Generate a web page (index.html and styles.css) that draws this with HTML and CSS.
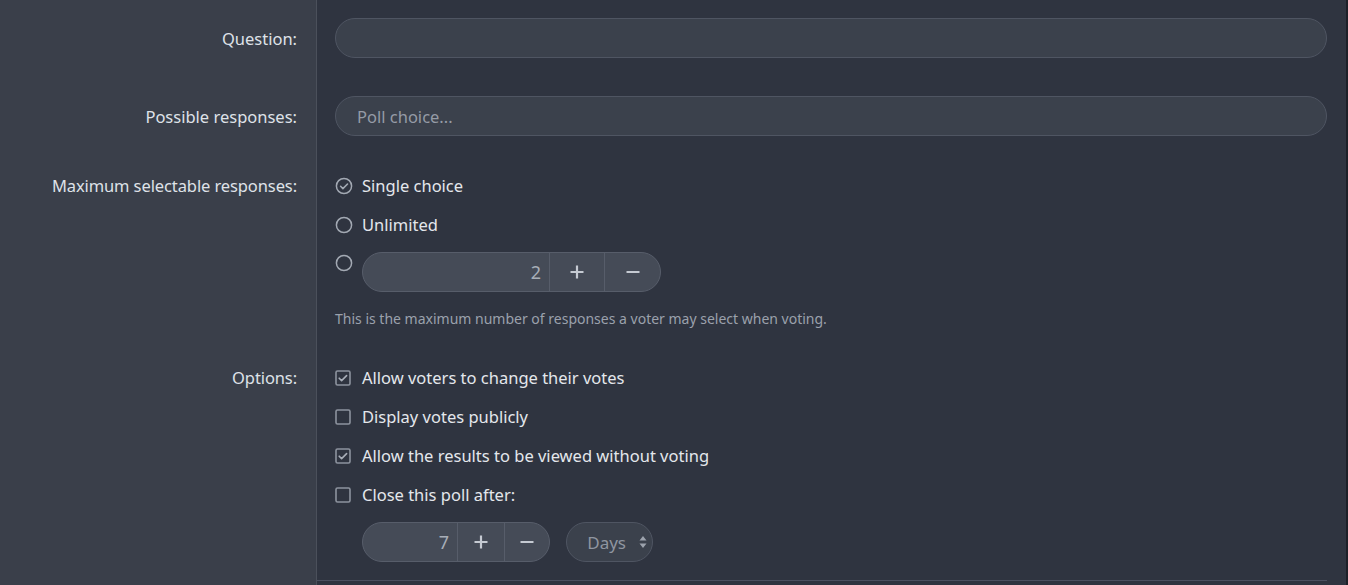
FILE: index.html
```html
<!DOCTYPE html>
<html lang="en">
<head>
<meta charset="utf-8">
<title>Poll</title>
<link rel="stylesheet" href="styles.css">
</head>
<body>
<div class="page">
  <div class="row row-q">
    <div class="label lh40">Question:</div>
    <div class="field"><div class="text-input"></div></div>
  </div>
  <div class="row row-p">
    <div class="label lh40">Possible responses:</div>
    <div class="field"><div class="text-input"><span class="placeholder">Poll choice...</span></div></div>
  </div>
  <div class="row row-m">
    <div class="label lh39">Maximum selectable responses:</div>
    <div class="field">
      <div class="opt">
        <svg class="radio" viewBox="0 0 18 18" width="18" height="18"><circle cx="9" cy="9" r="7.6" fill="none" stroke="#a3a9b3" stroke-width="1.5"/><path d="M5.6 9.3l2.3 2.3 4.6-4.6" fill="none" stroke="#a3a9b3" stroke-width="1.6" stroke-linecap="round" stroke-linejoin="round"/></svg>
        <span>Single choice</span>
      </div>
      <div class="opt">
        <svg class="radio" viewBox="0 0 18 18" width="18" height="18"><circle cx="9" cy="9" r="7.6" fill="none" stroke="#a3a9b3" stroke-width="1.5"/></svg>
        <span>Unlimited</span>
      </div>
      <div class="opt opt-num">
        <svg class="radio" viewBox="0 0 18 18" width="18" height="18"><circle cx="9" cy="9" r="7.6" fill="none" stroke="#a3a9b3" stroke-width="1.5"/></svg>
        <div class="num-group wide">
          <div class="num-val">2</div>
          <div class="num-btn plus"><svg viewBox="0 0 16 16" width="16" height="16"><path d="M8 1.5v13M1.5 8h13" stroke="#c5cad2" stroke-width="2.2"/></svg></div>
          <div class="num-btn minus"><svg viewBox="0 0 16 16" width="16" height="16"><path d="M1.5 8h13" stroke="#c5cad2" stroke-width="2.2"/></svg></div>
        </div>
      </div>
      <p class="help">This is the maximum number of responses a voter may select when voting.</p>
    </div>
  </div>
  <div class="row row-o">
    <div class="label lh39">Options:</div>
    <div class="field">
      <div class="opt">
        <svg class="check" viewBox="0 0 16 16" width="16" height="16"><rect x="1" y="1" width="14" height="14" rx="1.5" fill="none" stroke="#8d939e" stroke-width="1.6"/><path d="M4.2 8.2l2.4 2.4 5-5" fill="none" stroke="#a8aeb8" stroke-width="1.6" stroke-linecap="round" stroke-linejoin="round"/></svg>
        <span>Allow voters to change their votes</span>
      </div>
      <div class="opt">
        <svg class="check" viewBox="0 0 16 16" width="16" height="16"><rect x="1" y="1" width="14" height="14" rx="1.5" fill="none" stroke="#8d939e" stroke-width="1.6"/></svg>
        <span>Display votes publicly</span>
      </div>
      <div class="opt">
        <svg class="check" viewBox="0 0 16 16" width="16" height="16"><rect x="1" y="1" width="14" height="14" rx="1.5" fill="none" stroke="#8d939e" stroke-width="1.6"/><path d="M4.2 8.2l2.4 2.4 5-5" fill="none" stroke="#a8aeb8" stroke-width="1.6" stroke-linecap="round" stroke-linejoin="round"/></svg>
        <span>Allow the results to be viewed without voting</span>
      </div>
      <div class="opt">
        <svg class="check" viewBox="0 0 16 16" width="16" height="16"><rect x="1" y="1" width="14" height="14" rx="1.5" fill="none" stroke="#8d939e" stroke-width="1.6"/></svg>
        <span>Close this poll after:</span>
      </div>
      <div class="close-after">
        <div class="num-group narrow">
          <div class="num-val">7</div>
          <div class="num-btn plus"><svg viewBox="0 0 16 16" width="16" height="16"><path d="M8 1.5v13M1.5 8h13" stroke="#c5cad2" stroke-width="2.2"/></svg></div>
          <div class="num-btn minus"><svg viewBox="0 0 16 16" width="16" height="16"><path d="M1.5 8h13" stroke="#c5cad2" stroke-width="2.2"/></svg></div>
        </div>
        <div class="select">
          <span>Days</span>
          <svg class="arrows" viewBox="0 0 8 14" width="8" height="14"><path d="M4 1l3.5 4.5h-7z M4 13l3.5-4.5h-7z" fill="#9ca2ac"/></svg>
        </div>
      </div>
      <div class="divider"></div>
    </div>
  </div>
</div>
</body>
</html>
```

FILE: styles.css
```css
* { box-sizing: border-box; }
html, body { margin: 0; padding: 0; }
body {
  font-family: "Noto Sans", "Open Sans", sans-serif;
  font-size: 16.5px;
  color: #e3e6eb;
  background: #2f3440;
}
.page {
  min-height: 585px;
  background: linear-gradient(to right, #3a3f4a 0, #3a3f4a 316px, #4b505b 316px, #4b505b 317px, #2f3440 317px);
  border-right: 2px solid #1d2028;
}
.row {
  display: grid;
  grid-template-columns: 317px 1fr;
}
.label {
  text-align: right;
  padding-right: 20px;
  color: #dfe2e8;
  white-space: nowrap;
}
.lh40 { line-height: 40px; height: 40px; padding-top: 1px; }
.lh39 { line-height: 39px; }
.label.lh39 { letter-spacing: -0.1px; }
.field {
  padding-left: 18px;
  padding-right: 19px;
}
.row-q { padding-top: 18px; }
.row-p { padding-top: 38px; }
.row-m { padding-top: 30px; }
.row-o { padding-top: 29px; }
.text-input {
  height: 40px;
  border: 1px solid #4f5562;
  border-radius: 20px;
  background: #3b414c;
  display: flex;
  align-items: center;
  padding-left: 21px;
  padding-top: 1px;
}
.placeholder { color: #959ba6; }
.opt {
  display: flex;
  align-items: center;
  height: 39px;
  gap: 9px;
  color: #e4e7ec;
}
.radio { flex: none; }
.check { flex: none; margin-right: 2px; }
.opt-num {
  align-items: flex-start;
  height: auto;
  margin-top: 8px;
}
.opt-num .radio { margin-top: 2px; }
.num-group {
  display: flex;
  height: 40px;
  border: 1px solid #575d6a;
  border-radius: 20px;
  background: #454b57;
  overflow: hidden;
}
.num-val {
  display: flex;
  align-items: center;
  justify-content: flex-end;
  padding-right: 8px;
  color: #a8aeb8;
  font-size: 18px;
}
.num-btn {
  display: flex;
  align-items: center;
  justify-content: center;
  border-left: 1px solid #575d6a;
}
.wide { width: 299px; }
.wide .num-val { width: 186px; }
.wide .plus { width: 55px; }
.wide .minus { flex: 1; }
.narrow { width: 188px; }
.narrow .num-val { width: 94px; }
.narrow .plus { width: 47px; }
.narrow .minus { flex: 1; }
.help {
  margin: 17px 0 0;
  font-size: 14px;
  line-height: 20px;
  color: #9ba1ac;
}
.close-after {
  display: flex;
  gap: 16px;
  margin-top: 8px;
  padding-left: 27px;
}
.select {
  width: 87px;
  height: 40px;
  border: 1px solid #4f5562;
  border-radius: 20px;
  background: #3b414c;
  display: flex;
  align-items: center;
  justify-content: flex-end;
  padding-right: 5px;
  gap: 13px;
  color: #8f95a0;
  font-size: 17px;
}
.divider {
  margin-top: 18px;
  margin-left: -18px;
  height: 1px;
  background: #4b5060;
}
```
